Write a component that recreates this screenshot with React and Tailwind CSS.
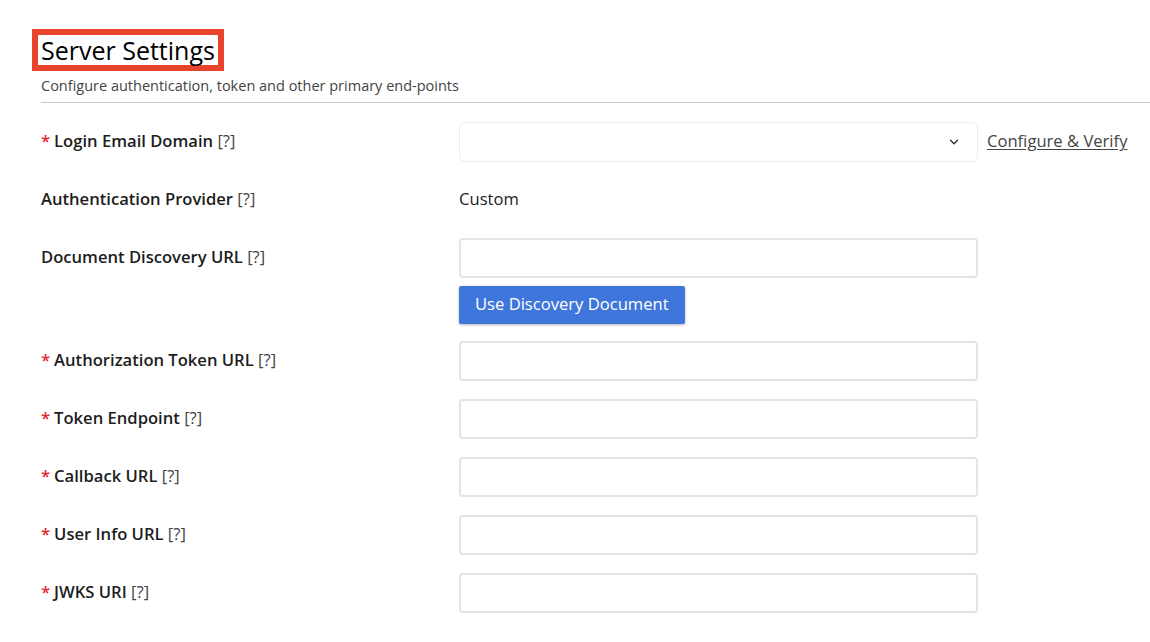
import React from 'react'

const fields = [
  { label: 'Authorization Token URL', required: true },
  { label: 'Token Endpoint', required: true },
  { label: 'Callback URL', required: true },
  { label: 'User Info URL', required: true },
  { label: 'JWKS URI', required: true },
]

const Label = ({ text, required }) => (
  <div className="w-[418px] shrink-0 text-[16.6px] font-semibold text-[#1d1d1d]">
    {required && <span className="text-[#e3262b] mr-[4px]">*</span>}
    {text} <span className="font-normal text-[#444]">[?]</span>
  </div>
)

const TextInput = () => (
  <div className="w-[519px] h-[40px] rounded-[4px] border-2 border-[#e4e4e4] bg-white" />
)

const App = () => {
  return (
    <div className="min-h-[642px] bg-white pt-[29px] pl-[32px] font-['Open_Sans',sans-serif] text-[#1d1d1d]">
      <div className="inline-block border-[6px] border-[#e8442c] px-[3px] leading-[30px] text-[25px] text-black">
        Server Settings
      </div>
      <div className="ml-[9px] mt-[4px] text-[14.5px] text-[#444]">
        Configure authentication, token and other primary end-points
      </div>
      <div className="ml-[9px] mt-[5px] h-px bg-[#c8c8c8]" />

      <div className="ml-[9px] mt-[19px] flex flex-col">
        <div className="flex items-center h-[40px]">
          <Label text="Login Email Domain" required />
          <div className="flex items-center justify-between w-[519px] h-[40px] rounded-[6px] border border-[#ececec] bg-white pr-[16px]">
            <span />
            <svg className="w-[14px] h-[14px] text-[#333]" fill="none" stroke="currentColor" viewBox="0 0 24 24">
              <path strokeLinecap="round" strokeLinejoin="round" strokeWidth={2.5} d="M6 9l6 6 6-6" />
            </svg>
          </div>
          <a className="ml-[9px] text-[16.6px] text-[#444] underline underline-offset-2">Configure &amp; Verify</a>
        </div>

        <div className="flex items-center h-[40px] mt-[18px]">
          <Label text="Authentication Provider" />
          <span className="text-[16.6px] text-[#222]">Custom</span>
        </div>

        <div className="flex items-center h-[40px] mt-[18px]">
          <Label text="Document Discovery URL" />
          <TextInput />
        </div>
        <div className="flex mt-[8px]">
          <div className="w-[418px] shrink-0" />
          <button className="h-[38px] px-[16px] rounded-[2px] bg-[#3f76db] text-white text-[16.6px] shadow-[0_1px_3px_rgba(0,0,0,0.3)]">
            Use Discovery Document
          </button>
        </div>

        <div className="flex flex-col gap-[18px] mt-[17px]">
          {fields.map((f, i) => (
            <div key={i} className="flex items-center h-[40px]">
              <Label text={f.label} required={f.required} />
              <TextInput />
            </div>
          ))}
        </div>
      </div>
    </div>
  )
}

export default App
